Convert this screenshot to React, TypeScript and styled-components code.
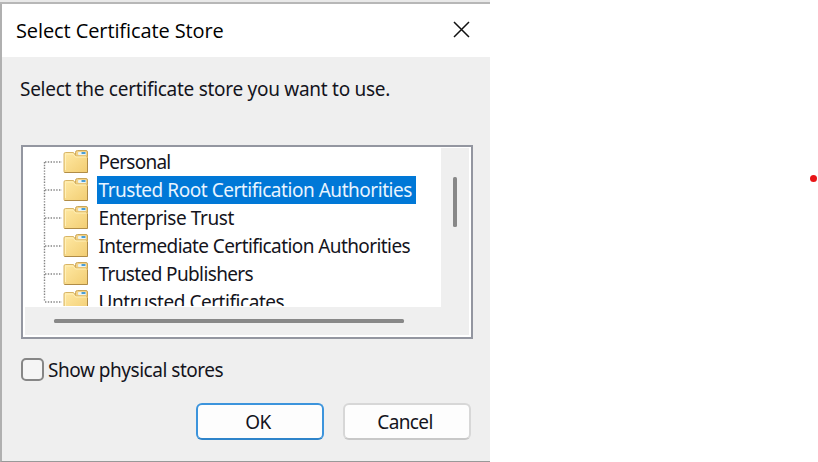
import React from "react";
import styled, { createGlobalStyle } from "styled-components";

const Global = createGlobalStyle`
  * { box-sizing: border-box; }
  body { margin: 0; background: #fff; overflow: hidden; }
`;

const uiFont = `"Noto Sans", Tahoma, sans-serif`;

const Page = styled.main`
  display: flex;
  align-items: flex-start;
  width: 818px;
  height: 462px;
  background: #fff;
`;

const Dialog = styled.section`
  display: flex;
  flex-direction: column;
  width: 490px;
  height: 462px;
  background: #efefef;
  border-left: 2px solid #b0b0b0;
  border-bottom: 1px solid #999;
  font-family: ${uiFont};
  color: #14141c;
`;

const TopEdge = styled.div`
  height: 4px;
  margin-left: -2px;
  background: #e9e9e9;
  border-bottom: 2px solid #b7b7b7;
`;

const TitleBar = styled.header`
  display: flex;
  align-items: center;
  justify-content: space-between;
  height: 53px;
  padding: 0 20px 0 14px;
  background: #fff;
`;

const Text = styled.span<{ $size?: number; $spacing?: number }>`
  display: block;
  font-size: ${(p) => p.$size ?? 19}px;
  line-height: 28px;
  letter-spacing: ${(p) => p.$spacing ?? 0}px;
  white-space: nowrap;
`;

const Title = styled(Text).attrs({ as: "h1" })`
  margin: 0;
  font-family: "Open Sans", "Segoe UI", sans-serif;
  font-weight: 400;
  color: #000;
`;

const CloseButton = styled.button`
  display: flex;
  padding: 0;
  border: 0;
  background: none;
  margin-top: -2px;
`;

const Body = styled.div`
  display: flex;
  flex-direction: column;
  padding: 18px 17px 0 19px;
`;

const Prompt = styled(Text)`
  margin-left: -1px;
`;

const ListBox = styled.div`
  display: grid;
  grid-template: 159px 28px / 416px 28px;
  width: 452px;
  height: 194px;
  margin-top: 42px;
  padding: 1px 1px 2px 2px;
  border: 2px solid #9396a0;
  background: #fff;
`;

const Tree = styled.ul`
  height: 158px;
  margin: 0;
  padding: 0;
  list-style: none;
  overflow: hidden;
`;

const Row = styled.li`
  display: flex;
  height: 28px;
  padding-left: 18px;
`;

const RowLabel = styled(Text)<{ $selected?: boolean }>`
  height: 28px;
  margin-left: 7.5px;
  padding: 0 4.5px 0 2px;
  color: ${(p) => (p.$selected ? "#e8f4ff" : "#14141c")};
  background: ${(p) => (p.$selected ? "#0078d7" : "transparent")};
`;

const VerticalTrack = styled.div`
  display: flex;
  justify-content: center;
  padding-top: 29px;
  background: #efefef;
`;

const HorizontalTrack = styled.div`
  grid-column: 1 / 3;
  display: flex;
  align-items: center;
  padding: 0 0 0 29px;
  background: #efefef;
`;

const Thumb = styled.div<{ $w: number; $h: number }>`
  width: ${(p) => p.$w}px;
  height: ${(p) => p.$h}px;
  border-radius: 1.5px;
  background: #888;
`;

const CheckRow = styled.label`
  display: flex;
  align-items: center;
  gap: 4px;
  height: 28px;
  margin-top: 17px;
`;

const CheckBox = styled.span`
  width: 23px;
  height: 23px;
  margin-top: -2px;
  border: 2px solid #868686;
  border-radius: 5px;
  background: #f5f5f5;
`;

const Actions = styled.div`
  display: flex;
  justify-content: flex-end;
  gap: 19px;
  margin-top: 19px;
  padding-right: 2px;
`;

const Button = styled.button<{ $primary?: boolean }>`
  display: flex;
  align-items: center;
  justify-content: center;
  width: 128px;
  height: 37px;
  padding: 1px 4px 0 0;
  border: 2px solid ${(p) => (p.$primary ? "#3c94dc" : "#d7d7d7")};
  border-bottom-color: ${(p) => (p.$primary ? "#2e84ca" : "#c8c8c8")};
  border-radius: 6px;
  background: #fdfdfd;
  color: #14141c;
  font-family: ${uiFont};
`;

const Dot = styled.span`
  width: 7px;
  height: 7px;
  margin: 175px 0 0 320px;
  border-radius: 50%;
  background: #e81416;
`;

const Branch = ({ first, last }: { first?: boolean; last?: boolean }) => (
  <svg width="20" height="28" fill="none" stroke="#858585" strokeWidth="1.4" strokeDasharray="1.4 1.4">
    <path d={`M1.500 ${first ? 14 : 0}V${last ? 14 : 28}M2 14H19`} />
  </svg>
);

const Folder = () => (
  <svg width="26" height="28" viewBox="0 0 26 28">
    <defs>
      <linearGradient id="folder" x1="0" y1="0" x2="1" y2="1">
        <stop offset="0" stopColor="#ffe9a4" />
        <stop offset="1" stopColor="#f2cd72" />
      </linearGradient>
    </defs>
    <path d="M12.500 8V4.500Q12.500 2.500 14.500 2.500H23Q24.500 2.500 24.500 4V9H12.500Z" fill="#f3d287" stroke="#c9a65a" />
    <rect x="15" y="4" width="8" height="3" rx="1" fill="#e9f4f5" />
    <rect x="18.500" y="4" width="4" height="2" rx=".6" fill="#4b9ed4" />
    <path d="M1 6Q1 4.500 2.500 4.500H10.500L13 8H23Q24.500 8 24.500 9V23.500Q24.500 24.500 23.500 24.500H2Q1 24.500 1 23.500Z" fill="url(#folder)" stroke="#d8b465" />
    <path d="M1.500 24.500H24.500V10" fill="none" stroke="#b08c47" />
    <path d="M2.500 22V6H10L12.500 9H23" fill="none" stroke="#fff0b8" />
  </svg>
);

const CloseIcon = () => (
  <svg width="17" height="17" fill="none" stroke="#111" strokeWidth="1.5">
    <path d="M1 1L16 16M16 1L1 16" />
  </svg>
);

const stores = [
  { name: "Personal", spacing: -0.75 },
  { name: "Trusted Root Certification Authorities", spacing: -0.46 },
  { name: "Enterprise Trust", spacing: -0.42 },
  { name: "Intermediate Certification Authorities", spacing: -0.58 },
  { name: "Trusted Publishers", spacing: -0.62 },
  { name: "Untrusted Certificates", spacing: -0.45 },
];

export default function App() {
  return (
    <>
      <Global />
      <Page>
        <Dialog>
          <TopEdge />
          <TitleBar>
            <Title $size={20} $spacing={-0.1}>Select Certificate Store</Title>
            <CloseButton aria-label="Close"><CloseIcon /></CloseButton>
          </TitleBar>
          <Body>
            <Prompt $spacing={-0.28}>Select the certificate store you want to use.</Prompt>
            <ListBox>
              <Tree>
                {stores.map((store, i) => (
                  <Row key={store.name}>
                    <Branch first={i === 0} last={i === stores.length - 1} />
                    <Folder />
                    <RowLabel $selected={i === 1} $spacing={store.spacing}>{store.name}</RowLabel>
                  </Row>
                ))}
              </Tree>
              <VerticalTrack><Thumb $w={4} $h={50} /></VerticalTrack>
              <HorizontalTrack><Thumb $w={350} $h={4} /></HorizontalTrack>
            </ListBox>
            <CheckRow>
              <CheckBox />
              <Text $spacing={-0.47}>Show physical stores</Text>
            </CheckRow>
            <Actions>
              <Button $primary><Text $spacing={-0.5}>OK</Text></Button>
              <Button><Text $spacing={-0.6}>Cancel</Text></Button>
            </Actions>
          </Body>
        </Dialog>
        <Dot />
      </Page>
    </>
  );
}
